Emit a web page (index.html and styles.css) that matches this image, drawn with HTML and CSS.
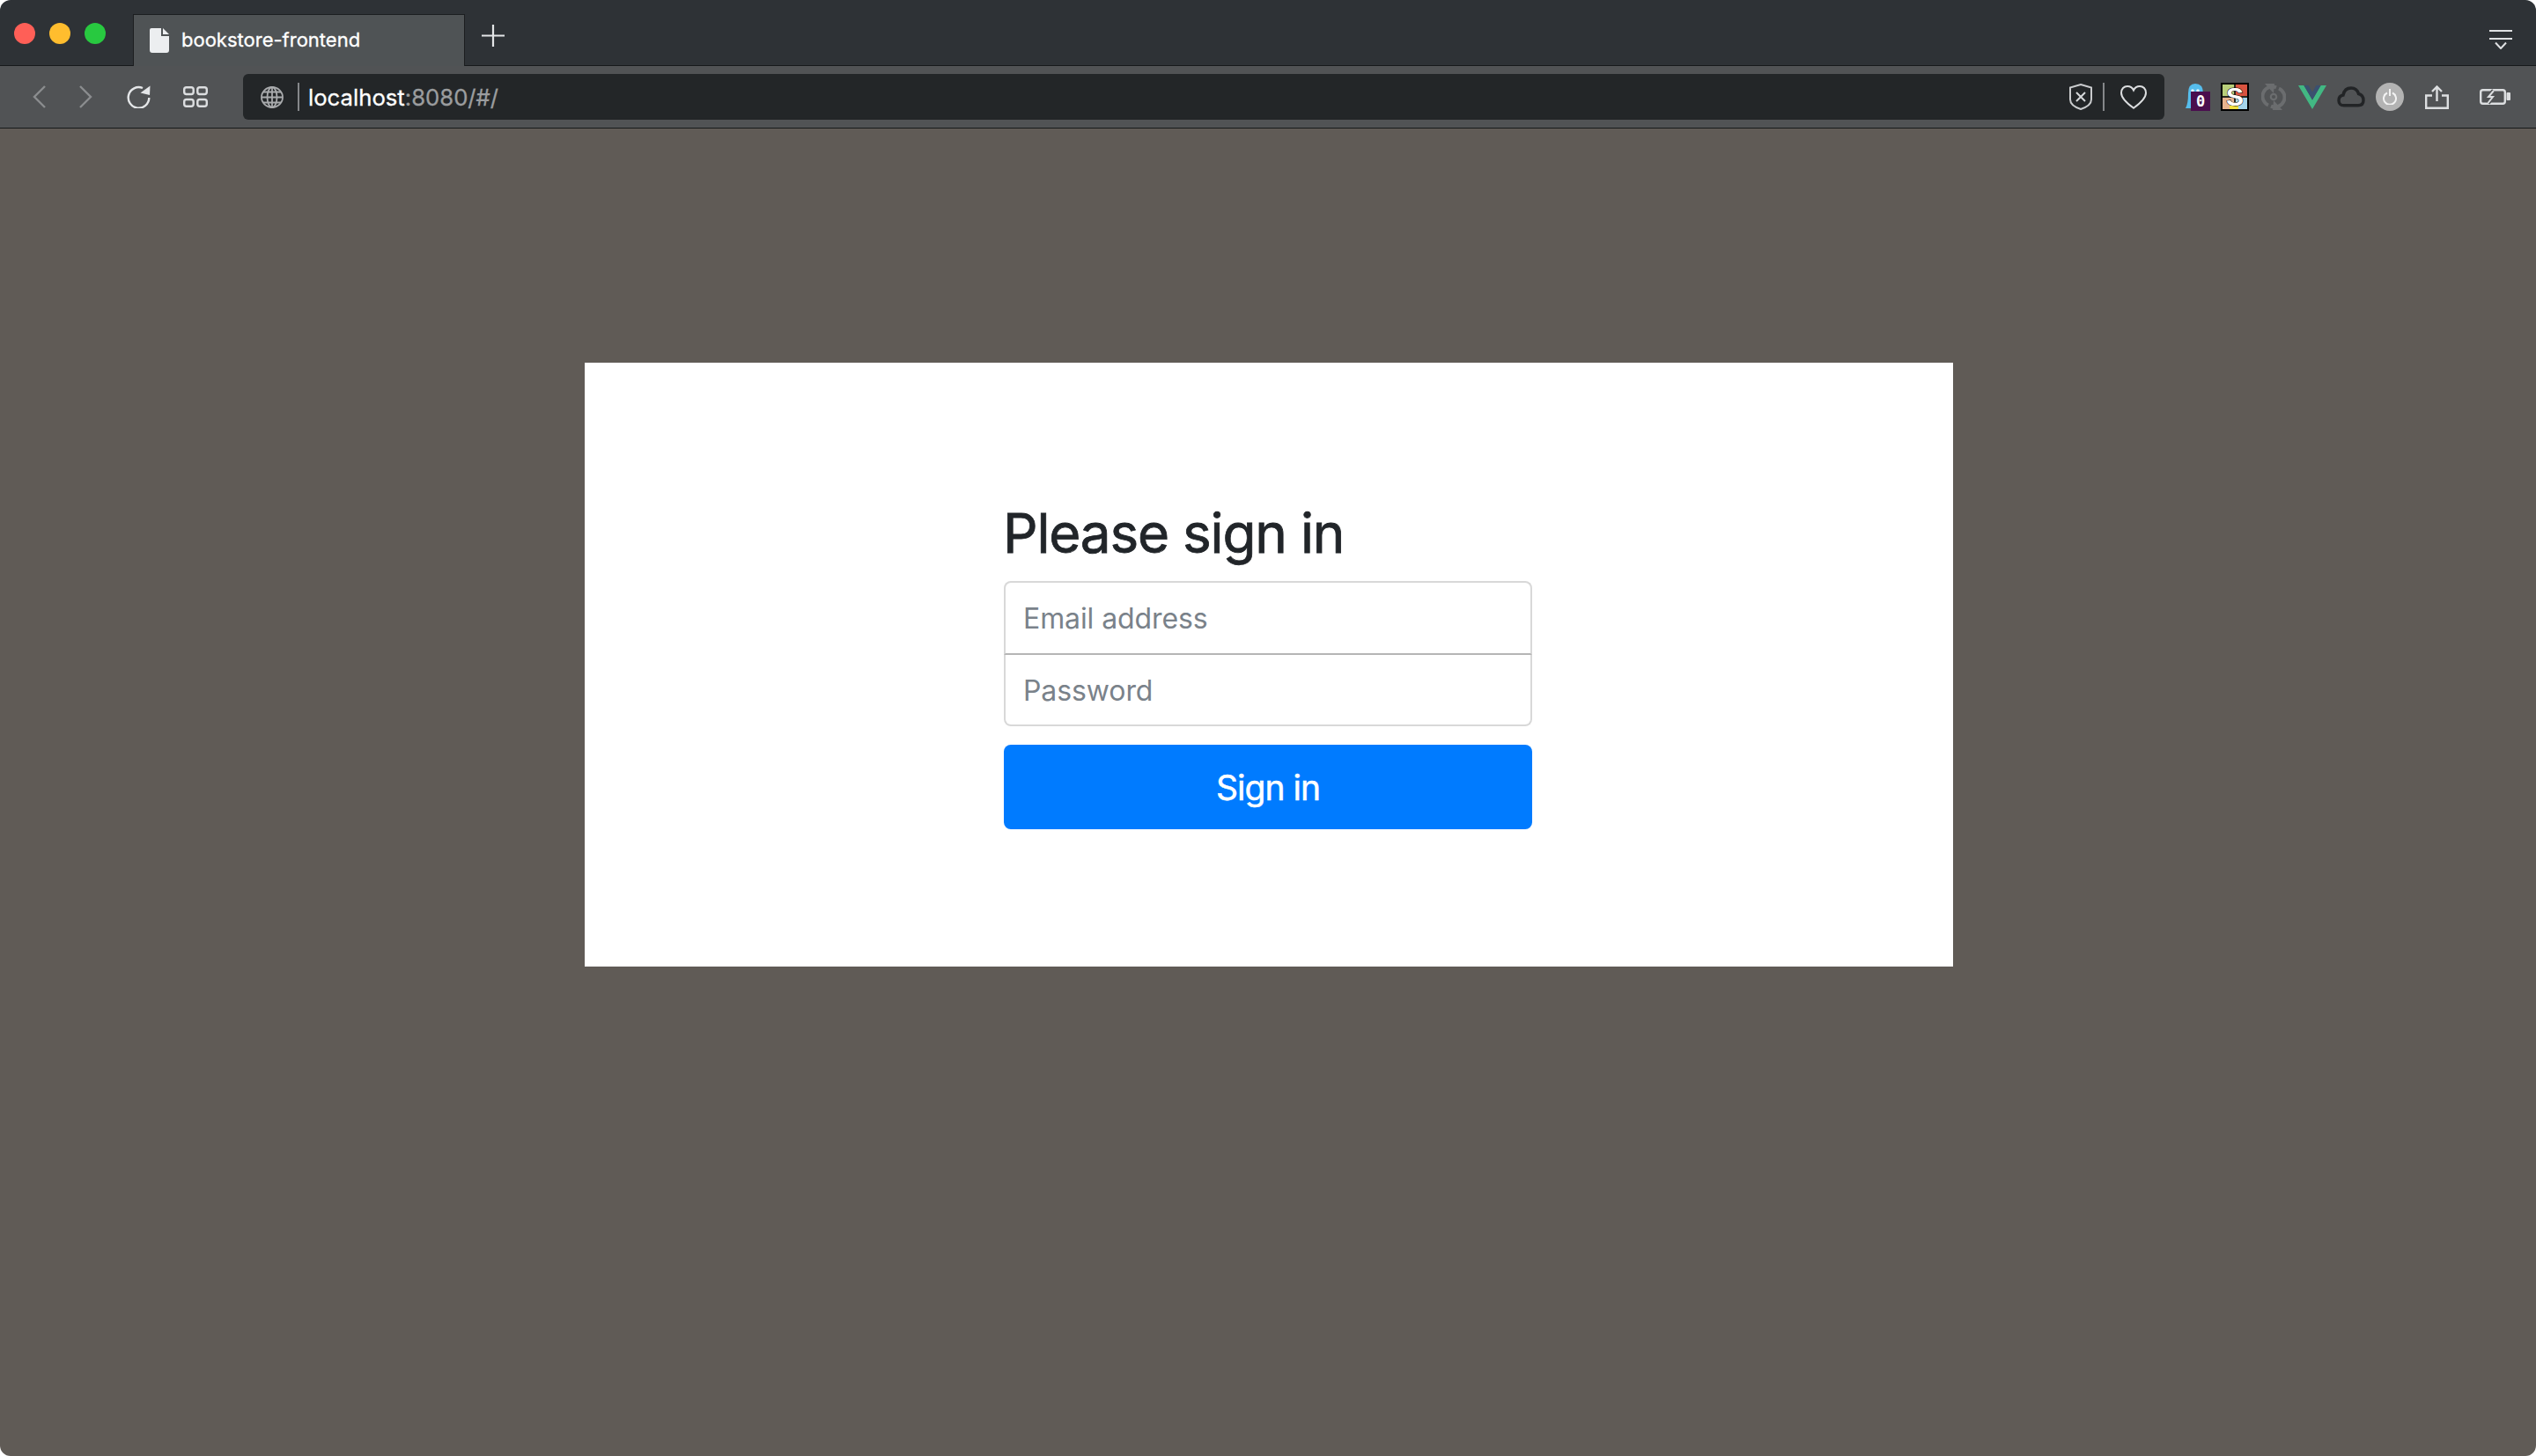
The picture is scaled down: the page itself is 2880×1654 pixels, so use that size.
FILE: index.html
```html
<!DOCTYPE html>
<html>
<head>
<meta charset="utf-8">
<title>bookstore-frontend</title>
<link rel="stylesheet" href="styles.css">
</head>
<body>
<div class="tabbar">
    <div class="traffic">
        <span class="dot red"></span>
        <span class="dot yellow"></span>
        <span class="dot green"></span>
    </div>
    <div class="tab">
        <svg class="page-icon" width="22" height="28" viewBox="0 0 22 28"><path d="M2 0H13V9H22V25Q22 28 19 28H3Q0 28 0 25V2Q0 0 2 0Z" fill="#eceef0"/><path d="M15 0L22 7H15Z" fill="#eceef0"/></svg>
        <span class="tab-title">bookstore-frontend</span>
    </div>
    <svg class="new-tab" width="26" height="25" viewBox="0 0 26 25"><path d="M13 0V25M0 12.5H26" stroke="#e4e6e8" stroke-width="2.2"/></svg>
    <svg class="tab-list" width="26" height="22" viewBox="0 0 26 22"><path d="M0 1H26M0 10H26M7 14.500L13 21L19 14.500" stroke="#dfe1e3" stroke-width="2" fill="none"/></svg>
</div>

<div class="toolbar">
    <div class="nav">
        <svg width="15" height="26" viewBox="0 0 15 26"><path d="M14 1L2 13L14 25" stroke="#8b8d8f" stroke-width="2.4" fill="none"/></svg>
        <svg width="15" height="26" viewBox="0 0 15 26"><path d="M1 1L13 13L1 25" stroke="#8b8d8f" stroke-width="2.4" fill="none"/></svg>
        <svg class="reload" width="27" height="26" viewBox="0 0 27 26"><path d="M18 3A11.800 11.800 0 1 0 25.300 14" stroke="#e4e6e8" stroke-width="2.400" fill="none"/><path d="M26.500 0.500L26 11L15.500 8.500Z" fill="#e4e6e8"/></svg>
        <svg class="grid" width="28" height="24" viewBox="0 0 28 24"><g fill="none" stroke="#dcdee0" stroke-width="2.400"><rect x="1.200" y="1.200" width="10.500" height="7.800" rx="2.500"/><rect x="16.300" y="1.200" width="10.500" height="7.800" rx="2.500"/><rect x="1.200" y="15" width="10.500" height="7.800" rx="2.500"/><rect x="16.300" y="15" width="10.500" height="7.800" rx="2.500"/></g></svg>
    </div>
    <div class="address">
        <svg class="globe" width="26" height="25" viewBox="0 0 26 25"><g fill="none" stroke="#a9abad" stroke-width="1.800"><ellipse cx="13" cy="12.500" rx="12" ry="11.500"/><ellipse cx="13" cy="12.500" rx="5.500" ry="11.500"/><path d="M13 1V24M1 12.500H25M3 6.500H23M3 18.500H23"/></g></svg>
        <span class="sep"></span>
        <span class="url"><span class="host">localhost</span>:8080/#/</span>
        <svg class="shield" width="26" height="30" viewBox="0 0 26 30"><path d="M13 1L25 4.500V18Q25 25 13 29Q1 25 1 18V4.500Z" fill="none" stroke="#c9cbcd" stroke-width="2"/><path d="M8 10L18 20M18 10L8 20" stroke="#d6d8da" stroke-width="2"/></svg>
        <span class="sep sep-right"></span>
        <svg class="heart" width="30" height="27" viewBox="0 0 30 27"><path d="M15 25.800C7 20 1 14.500 1 8.500C1 4 4 1 8 1C11 1 13.700 2.700 15 5.500C16.300 2.700 19 1 22 1C26 1 29 4 29 8.500C29 14.500 23 20 15 25.800Z" fill="none" stroke="#dcdee0" stroke-width="2"/></svg>
    </div>
    <div class="extensions">
        <div class="ghost">
            <svg width="20" height="28" viewBox="0 0 20 28"><path d="M0 28Q3 23 3 11Q3 0 11 0Q20 0 20 11V28Z" fill="#56bdec"/><circle cx="8" cy="8" r="1.800" fill="#e8f6fd"/><circle cx="14" cy="8" r="1.800" fill="#e8f6fd"/></svg>
            <span class="ghost-badge">0</span>
        </div>
        <div class="sumo">
            <span class="q q1"></span><span class="q q2"></span><span class="q q3"></span><span class="q q4"></span>
            <span class="sumo-dot"></span>
            <span class="sumo-s">S</span>
        </div>
        <svg class="disc" width="28" height="32" viewBox="0 0 28 32"><g fill="none" stroke="#6b6d6f"><path d="M17 5.400A11 11 0 0 0 8 25.500" stroke-width="4"/><path d="M11 26.600A11 11 0 0 0 20 6.500" stroke-width="4"/><circle cx="14" cy="16" r="3.200" stroke-width="2.200"/></g><path d="M4 1H15L14 12ZM24 31H13L14 20Z" fill="#6b6d6f"/></svg>
        <svg class="vue" width="32" height="27" viewBox="0 0 32 27"><path d="M0 0H6.400L16 16.500L25.600 0H32L16 27Z" fill="#42b883"/><path d="M6.400 0H11.500L16 7.500L20.500 0H25.600L16 16.500Z" fill="#3a5070"/></svg>
        <svg class="cloud" width="32" height="24" viewBox="0 0 32 24"><path d="M8 21.800Q2 21.800 2 16Q2 11 7 10Q8.500 2 16 2Q22.500 2 24.500 8.500Q30 10 30 16Q30 21.800 24 21.800Z" fill="none" stroke="#222426" stroke-width="3.400"/></svg>
        <div class="power">
            <svg width="16" height="18" viewBox="0 0 16 18"><path d="M5 4.500A7 7 0 1 0 11 4.500M8 0V8" fill="none" stroke="#f2f2f2" stroke-width="2"/></svg>
        </div>
        <svg class="share" width="27" height="27" viewBox="0 0 27 27"><path d="M13.500 18V1.500M8 7L13.500 1.500L19 7M8 11.500H1.200V25.800H25.800V11.500H19" fill="none" stroke="#dcdee0" stroke-width="2.400"/></svg>
        <svg class="battery" width="35" height="18" viewBox="0 0 35 18"><rect x="1.200" y="1.200" width="27.600" height="15.600" rx="2.500" fill="none" stroke="#dcdee0" stroke-width="2.400"/><rect x="30.500" y="4" width="4.500" height="9" rx="1" fill="#dcdee0"/><path d="M16 2L10 9H15L9.500 16" fill="none" stroke="#515355" stroke-width="5"/><path d="M16 2L10 9H15L9.500 16" fill="none" stroke="#dcdee0" stroke-width="2"/></svg>
    </div>
</div>

<div class="page">
    <div class="card">
        <form class="signin">
            <h1 class="signin-title">Please sign in</h1>
            <input class="field field-top" type="email" placeholder="Email address">
            <input class="field field-bottom" type="password" placeholder="Password">
            <button class="submit" type="button">Sign in</button>
        </form>
    </div>
</div>
</body>
</html>
```

FILE: styles.css
```css
html, body
{
    margin: 0;
    height: 100%;
    background: #fff;
}

body
{
    display: flex;
    flex-direction: column;
    font-family: Inter, "Liberation Sans", sans-serif;
    overflow: hidden;
}

/* browser chrome */

.tabbar
{
    display: flex;
    align-items: flex-end;
    height: 74px;
    padding-left: 16px;
    background: #2e3236;
    border-bottom: 1px solid #17191b;
    border-radius: 12px 12px 0 0;
    flex: none;
}

.traffic
{
    display: flex;
    gap: 16px;
    width: 135px;
    height: 48px;
    flex: none;
}

.dot
{
    width: 24px;
    height: 24px;
    border-radius: 50%;
}

.red { background: #ff5f57; }
.yellow { background: #ffbd2e; }
.green { background: #28c940; }

.tab
{
    display: flex;
    align-items: center;
    gap: 14px;
    width: 357px;
    height: 58px;
    padding-left: 18px;
    margin-bottom: -1px;
    background: #4f5355;
    border: 1px solid #1c1e20;
    border-bottom: 0;
    flex: none;
}

.page-icon
{
    flex: none;
}

.tab-title
{
    margin-bottom: 2px;
    color: #fff;
    font-size: 22px;
    white-space: nowrap;
    -webkit-text-stroke: 0.3px #fff;
}

.new-tab
{
    margin: 0 0 21px 19px;
}

.tab-list
{
    margin: 0 27px 18px auto;
}

.toolbar
{
    display: flex;
    align-items: center;
    height: 70px;
    background: #515355;
    border-bottom: 1px solid #17191b;
    flex: none;
}

.nav
{
    display: flex;
    align-items: center;
    width: 276px;
    padding-left: 37px;
    box-sizing: border-box;
    gap: 38px;
    flex: none;
}

.reload
{
    margin-left: 1px;
}

.grid
{
    margin-left: -1px;
}

.address
{
    display: flex;
    align-items: center;
    width: 2182px;
    height: 52px;
    background: #232628;
    border-radius: 6px;
    padding-left: 20px;
    box-sizing: border-box;
    flex: none;
}

.sep
{
    width: 2px;
    height: 32px;
    margin: 0 10px 0 16px;
    background: #85878a;
    flex: none;
}

.url
{
    color: #9b9d9f;
    font-size: 25.700px;
    flex: 1;
    -webkit-text-stroke: 0.3px;
}

.host
{
    color: #fff;
}

.sep-right
{
    margin: 0 18px 0 12px;
}

.heart
{
    margin-right: 20px;
}

.extensions
{
    display: flex;
    align-items: center;
    height: 100%;
    padding-left: 24px;
    gap: 12px;
    flex: 1;
}

.extensions > *
{
    flex: none;
}

.ghost
{
    position: relative;
    width: 28px;
    height: 31px;
}

.ghost-badge
{
    position: absolute;
    right: 0;
    bottom: 0;
    width: 22px;
    height: 22px;
    background: #4a0e4e;
    color: #fff;
    font: bold 17px/22px "DejaVu Sans Mono", monospace;
    text-align: center;
}

.sumo
{
    position: relative;
    display: grid;
    grid-template-columns: 1fr 1fr;
    grid-template-rows: 1fr 1fr;
    gap: 2px;
    width: 28px;
    height: 28px;
    background: #2a2a20;
    border: 2px solid #000;
}

.q1 { background: #b9cf7a; }
.q2 { background: #d9533f; }
.q3 { background: #e8b48f; }
.q4 { background: #a5d5ea; }

.sumo-dot
{
    position: absolute;
    left: 8px;
    bottom: 0;
    width: 10px;
    height: 8px;
    background: #f0e040;
}

.sumo-s
{
    position: absolute;
    inset: 0;
    color: #fff;
    font: bold 30px/28px "Liberation Sans", sans-serif;
    text-align: center;
    -webkit-text-stroke: 1px #000;
    paint-order: stroke fill;
}

.disc,
.vue
{
    margin-left: 2px;
}

.power
{
    display: flex;
    align-items: center;
    justify-content: center;
    width: 32px;
    height: 32px;
    border-radius: 50%;
    background: #b3b3b3;
}

.share
{
    margin-left: 12px;
}

.battery
{
    margin-left: 23px;
}

/* page */

.page
{
    flex: 1;
    padding: 266px 662px 0 664px;
    background: #605b56;
    border-radius: 0 0 12px 12px;
}

.card
{
    display: flex;
    justify-content: center;
    height: 686px;
    background: #fff;
}

.signin
{
    display: flex;
    flex-direction: column;
    width: 600px;
    margin-left: -2px;
    padding-top: 157px;
}

.signin-title
{
    margin: 0 0 17px -1px;
    color: #212529;
    font-size: 62px;
    font-weight: 400;
    line-height: 74px;
    letter-spacing: -1.200px;
    -webkit-text-stroke: 0.8px #212529;
}

.field
{
    padding: 0 20px;
    box-sizing: border-box;
    background: #fff;
    border: 2px solid #d8d8d8;
    font: 32px Inter, "Liberation Sans", sans-serif;
    letter-spacing: -0.100px;
    outline: 0;
}

.field::placeholder
{
    color: #7a828a;
    opacity: 1;
}

.field-top
{
    height: 84px;
    border-radius: 8px 8px 0 0;
    border-bottom-color: #b5b5b5;
}

.field-bottom
{
    height: 81px;
    padding-top: 1px;
    border-top: 0;
    border-radius: 0 0 8px 8px;
}

.submit
{
    height: 96px;
    margin-top: 21px;
    background: #007bff;
    border: 0;
    border-radius: 8px;
    color: #fff;
    font: 39px Inter, "Liberation Sans", sans-serif;
    letter-spacing: -1px;
    -webkit-text-stroke: 0.5px #fff;
}
```
